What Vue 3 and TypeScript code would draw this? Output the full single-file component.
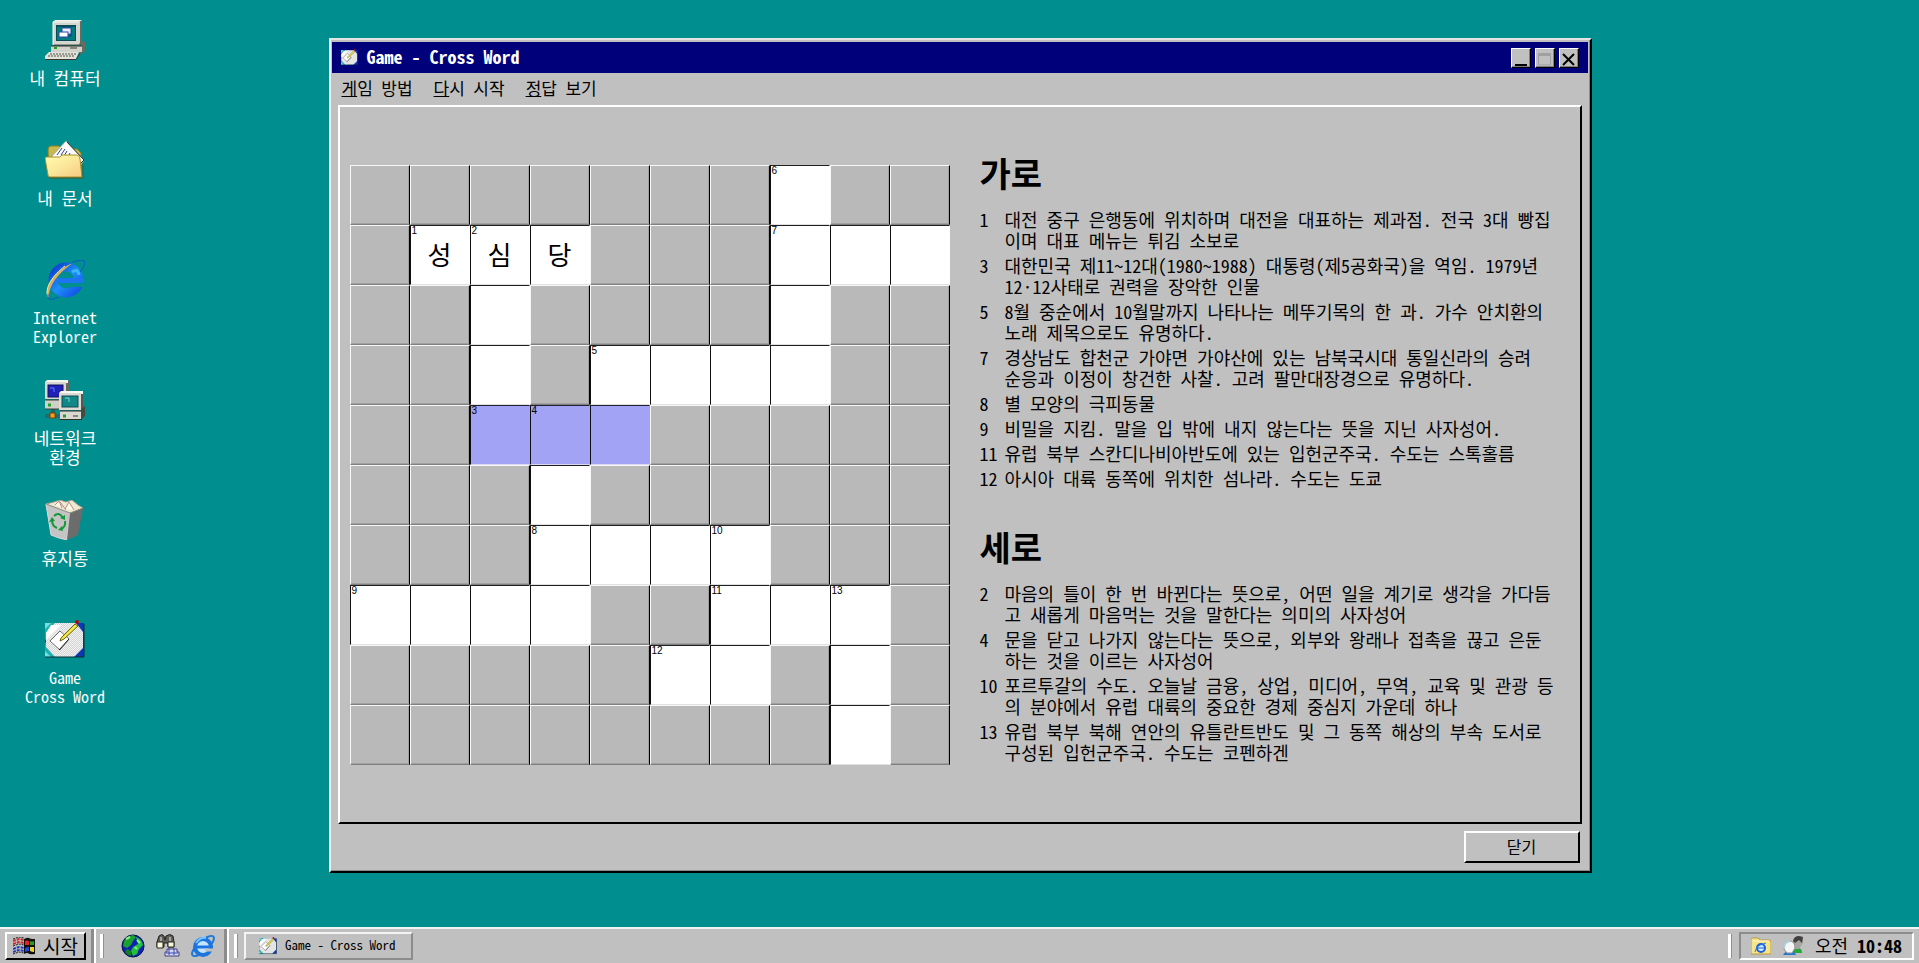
<script setup lang="ts">
import { ref, computed } from 'vue'

interface Shortcut {
  icon: string
  label: string
  korean?: boolean
}

interface Clue {
  no: number
  text: string
}

const shortcuts: Shortcut[] = [
  { icon: 'computer', label: '내 컴퓨터', korean: true },
  { icon: 'documents', label: '내 문서', korean: true },
  { icon: 'explorer', label: 'Internet\nExplorer' },
  { icon: 'network', label: '네트워크\n환경', korean: true },
  { icon: 'trash', label: '휴지통', korean: true },
  { icon: 'crossword', label: 'Game\nCross Word' },
]

const menus = [
  { key: '게', rest: '임 방법' },
  { key: '다', rest: '시 시작' },
  { key: '정', rest: '답 보기' },
]

const across: Clue[] = [
  { no: 1, text: '대전 중구 은행동에 위치하며 대전을 대표하는 제과점. 전국 3대 빵집이며 대표 메뉴는 튀김 소보로' },
  { no: 3, text: '대한민국 제11~12대(1980~1988) 대통령(제5공화국)을 역임. 1979년 12·12사태로 권력을 장악한 인물' },
  { no: 5, text: '8월 중순에서 10월말까지 나타나는 메뚜기목의 한 과. 가수 안치환의 노래 제목으로도 유명하다.' },
  { no: 7, text: '경상남도 합천군 가야면 가야산에 있는 남북국시대 통일신라의 승려 순응과 이정이 창건한 사찰. 고려 팔만대장경으로 유명하다.' },
  { no: 8, text: '별 모양의 극피동물' },
  { no: 9, text: '비밀을 지킴. 말을 입 밖에 내지 않는다는 뜻을 지닌 사자성어.' },
  { no: 11, text: '유럽 북부 스칸디나비아반도에 있는 입헌군주국. 수도는 스톡홀름' },
  { no: 12, text: '아시아 대륙 동쪽에 위치한 섬나라. 수도는 도쿄' },
]

const down: Clue[] = [
  { no: 2, text: '마음의 틀이 한 번 바뀐다는 뜻으로, 어떤 일을 계기로 생각을 가다듬고 새롭게 마음먹는 것을 말한다는 의미의 사자성어' },
  { no: 4, text: '문을 닫고 나가지 않는다는 뜻으로, 외부와 왕래나 접촉을 끊고 은둔하는 것을 이르는 사자성어' },
  { no: 10, text: '포르투갈의 수도. 오늘날 금융, 상업, 미디어, 무역, 교육 및 관광 등의 분야에서 유럽 대륙의 중요한 경제 중심지 가운데 하나' },
  { no: 13, text: '유럽 북부 북해 연안의 유틀란트반도 및 그 동쪽 해상의 부속 도서로 구성된 입헌군주국. 수도는 코펜하겐' },
]

const groups = [
  { title: '가로', clues: across },
  { title: '세로', clues: down },
]

// '#' is an open square, '*' an open square of the selected word
const layout = [
  '.......#..',
  '.###...###',
  '..#....#..',
  '..#.####..',
  '..***.....',
  '...#......',
  '...####...',
  '####..###.',
  '.....##.#.',
  '........#.',
]

const numbers: Record<string, number> = {
  '0-7': 6, '1-1': 1, '1-2': 2, '1-7': 7, '3-4': 5, '4-2': 3, '4-3': 4,
  '6-3': 8, '6-6': 10, '7-0': 9, '7-6': 11, '7-8': 13, '8-5': 12,
}

const answers = ref<Record<string, string>>({ '1-1': '성', '1-2': '심', '1-3': '당' })

const cells = computed(() =>
  layout.flatMap((row, r) =>
    [...row].map((mark, c) => {
      const id = `${r}-${c}`
      return { id, open: mark !== '.', selected: mark === '*', no: numbers[id], label: `${r + 1}행 ${c + 1}열` }
    }),
  ),
)
</script>

<template>
  <div class="screen">
    <svg class="defs" aria-hidden="true">
      <defs>
        <linearGradient id="g-ie" x1="0" y1="0" x2="1" y2="1">
          <stop offset="0" stop-color="#0a3fd0" />
          <stop offset="0.5" stop-color="#1e90f8" />
          <stop offset="1" stop-color="#1450e8" />
        </linearGradient>
        <linearGradient id="g-folder" x1="0" y1="0" x2="1" y2="1">
          <stop offset="0" stop-color="#fffcb0" />
          <stop offset="0.5" stop-color="#fbe79a" />
          <stop offset="1" stop-color="#f8c880" />
        </linearGradient>
        <pattern id="p-dots" width="2" height="2" patternUnits="userSpaceOnUse">
          <rect width="2" height="2" fill="#f2f2f2" />
          <rect width="1" height="1" fill="#d4d4d4" />
          <rect x="1" y="1" width="1" height="1" fill="#d4d4d4" />
        </pattern>

        <symbol id="computer" viewBox="0 0 40 40">
          <path d="M33 1l4-1v23l-3 2z" fill="#6a6a60" />
          <path d="M8 2l2-2h27l-3 2z" fill="#f4f4ee" />
          <rect x="8" y="1" width="27" height="24" rx="1" fill="#d6d6d0" />
          <path d="M8 25V2h26" fill="none" stroke="#f8f8f4" />
          <path d="M9 25h26v-2" fill="none" stroke="#585850" />
          <rect x="11" y="5" width="20" height="16" fill="#084c58" />
          <rect x="12" y="7" width="18" height="13" fill="#007c80" />
          <path d="M17 8h9v8h-3" fill="none" stroke="#003c70" stroke-width="1" />
          <rect x="17" y="8" width="9" height="6" fill="#e8f0ff" stroke="#3048a0" />
          <rect x="14" y="12" width="9" height="5" fill="#fff" stroke="#3048a0" />
          <path d="M36 22l4-1v10l-5 4z" fill="#6a6a60" />
          <path d="M6 26h31v6H6z" fill="#d2d2ca" />
          <path d="M6 26h31" stroke="#282820" />
          <path d="M9 28h3" stroke="#20a020" stroke-width="2" />
          <path d="M25 28h7" stroke="#383830" />
          <path d="M4 32h30l-3 7H0v-3z" fill="#e2e2da" />
          <path d="M0 39.5h31l4-6" fill="none" stroke="#383830" />
          <path d="M5 34h26M3 36h26" stroke="#50504a" stroke-width="1" stroke-dasharray="2 1" />
        </symbol>

        <symbol id="documents" viewBox="0 0 40 40">
          <path d="M3 10q0-4 3-4h8l3 3h15l4 4v24H4z" fill="#c8b850" stroke="#8c8020" />
          <path d="M7 16L21 1l18 19-4 6-28-8z" fill="#fbfbfb" stroke="#a8a8a8" />
          <path d="M22 2l17 18-3 3" fill="none" stroke="#303030" />
          <path d="M12 15l5-7M16 15l4-6M19 16l3-5M23 17l2-4" stroke="#304080" stroke-width="1" />
          <path d="M0 18q0-1 2-1h13l2-2h15q3 1 3 4l2 18H5q-2 0-2-2z" fill="url(#g-folder)" stroke="#a89030" />
          <path d="M4 38h34V24" fill="none" stroke="#5c5820" />
        </symbol>

        <symbol id="explorer" viewBox="0 0 40 40">
          <circle cx="21" cy="20" r="13" fill="none" stroke="url(#g-ie)" stroke-width="9" />
          <rect x="11" y="18" width="28" height="5" fill="#1c74f0" />
          <path d="M25 23h15v4h-15z" fill="#008e8e" />
          <path d="M27 12q6-4 7 3" fill="none" stroke="#38b8f8" stroke-width="3" />
          <path d="M4 38C-3 30 9 10 28 3C12 14 3 27 4 38z" fill="#d8b060" />
          <path d="M3 37C-1 28 8 15 20 6" fill="none" stroke="#f8e8a0" />
          <path d="M26 3q14-6 14 0-1 5-5 9M3 34q-2 9 11 3" fill="none" stroke="#0b57c8" stroke-width="1" />
        </symbol>

        <symbol id="explorer-small" viewBox="0 0 24 24">
          <ellipse cx="12" cy="12" rx="14" ry="5" transform="rotate(-42 12 12)" fill="none" stroke="#1e78d8" stroke-width="2" />
          <circle cx="12" cy="13" r="8" fill="#c4e4ff" stroke="#1c74dc" stroke-width="4" />
          <path d="M6 13h16" stroke="#1c74dc" stroke-width="3" />
          <path d="M14 16h9" stroke="#c0c0c0" stroke-width="3" />
          <path d="M5 9q4-6 10-5" fill="none" stroke="#74c4ff" stroke-width="2" />
        </symbol>

        <symbol id="network" viewBox="0 0 40 40">
          <path d="M20 2l4-1v26l-3 1z" fill="#686860" />
          <path d="M0 2l2-2h21v3H0z" fill="#f4f4f0" />
          <rect x="0" y="2" width="21" height="17" fill="#d8d8d0" />
          <rect x="3" y="5" width="15" height="12" fill="#2020b8" stroke="#101060" />
          <path d="M5 8h4v4" fill="none" stroke="#6080ff" />
          <path d="M0 20h20v9H0z" fill="#d0d0c8" />
          <path d="M0 20h20M0 29h14" stroke="#404038" />
          <path d="M3 25h3" stroke="#20a030" stroke-width="3" />
          <path d="M7 29v6M9 29v6" stroke="#404040" />
          <path d="M0 35h16M0 37h16" stroke="#484848" />
          <rect x="5" y="33" width="5" height="5" fill="#f0a020" stroke="#804000" />
          <path d="M36 12l2-1v17l-3 2z" fill="#585850" />
          <path d="M14 13l2-2h22v3z" fill="#f8f8f4" />
          <rect x="14" y="13" width="22" height="17" fill="#dcdcd4" />
          <rect x="17" y="16" width="16" height="11" fill="#108888" stroke="#104850" />
          <path d="M20 18h4v4" fill="none" stroke="#80d8d0" />
          <path d="M36 29l4-3v10l-4 4z" fill="#484840" />
          <path d="M15 31h21v8H15z" fill="#d8d8d0" />
          <path d="M15 31h21M15 39.500h22" stroke="#303028" />
          <path d="M18 36h3" stroke="#20a030" stroke-width="3" />
          <path d="M28 36h5" stroke="#303030" />
        </symbol>

        <symbol id="trash" viewBox="0 0 40 40">
          <path d="M1 4l8-2 6-2 6 2 6-2 6 5 5 3-12 7L2 10z" fill="#f0e8d0" stroke="#a09888" />
          <path d="M10 5l4-4 3 7M20 9l4-7 5 8M15 2l6 8" fill="#fff8e8" stroke="#b09088" />
          <path d="M1 4l9 3 15 6-3 27-8-2-8-3z" fill="#c4c4c4" stroke="#d8d8d8" />
          <path d="M25 13L38 8 33 35l-11 5z" fill="#6c6c6c" />
          <path d="M1 4l24 9 13-5" fill="none" stroke="#8c8c80" />
          <path d="M9 16q5-5 9 2M20 21q1 6-4 8M12 28q-5-2-5-8" fill="none" stroke="#149838" stroke-width="2" />
          <path d="M15 18l5 2 0-5zM18 31l-5-1 4-4zM4 22l3-5 3 4z" fill="#149838" />
        </symbol>

        <symbol id="crossword" viewBox="0 0 40 40">
          <rect x="0" y="3" width="39" height="34" fill="#1038b0" />
          <path d="M0 3h20L0 20zM0 22l16 15H0z" fill="#20b0b0" />
          <path d="M0 3h6L0 9zM0 31l6 6H0z" fill="#78e0d8" />
          <path d="M10 3h21l7 9v16l-9 9H10L1 27V13z" fill="url(#p-dots)" />
          <path d="M6 5h10L1 20v-7z" fill="#fff" />
          <path d="M0 37h39V4" fill="none" stroke="#083038" />
          <path d="M5 21l10-10 9 8-9 11z" fill="#fff" stroke="#707070" />
          <path d="M14 30l10-11" stroke="#202020" />
          <path d="M16 18L30 4l3 2-14 13-4 2z" fill="#f0e840" stroke="#706018" />
          <circle cx="32" cy="2" r="2" fill="#b00808" />
        </symbol>

        <symbol id="windows" viewBox="0 0 22 18">
          <path d="M11 2q4-2 5-1t6 1v15q-6 1-7-1-3 0-4 1z" fill="#101010" />
          <path d="M12 4q2-1 4 0v4h-4z" fill="#e82020" />
          <path d="M17 4q2 1 4 0v4h-4z" fill="#20a030" />
          <path d="M12 11q2-1 4-1v4q-2 0-4 1z" fill="#2048e0" />
          <path d="M17 10h4v5q-2 0-4-1z" fill="#f0d820" />
          <path d="M0 4l6-2 5 1M0 7l6-2 5 1" fill="none" stroke="#d02828" stroke-width="2" stroke-dasharray="3 1" />
          <path d="M0 12l6-2 5 1M0 15l6-2 5 1" fill="none" stroke="#2838b8" stroke-width="2" stroke-dasharray="3 1" />
          <path d="M0 2l6-2 5 1M0 9l6-2 5 1M0 17l6-2 5 1" fill="none" stroke="#202020" stroke-dasharray="2 1" />
        </symbol>

        <symbol id="globe" viewBox="0 0 24 24">
          <circle cx="12" cy="12" r="11" fill="#1020b0" stroke="#001048" />
          <path d="M3 7q3-5 9-6l3 2-3 4-2 4-4 3-4-2z" fill="#18a030" />
          <path d="M15 3q6 2 7 8l-4 4-2 5-4 2-2-5 2-4 5-3z" fill="#20c040" />
          <path d="M6 15l4 2v5q-4-1-6-4z" fill="#10801c" />
          <path d="M5 5l4-2M16 6l3 3M14 13l2 2" stroke="#90f080" stroke-width="2" />
        </symbol>

        <symbol id="search" viewBox="0 0 24 24">
          <path d="M1 8l2-6q3-3 5 0l1 4 1-4q4-3 7 0l1 6v5h-6V9H8v4H1z" fill="#606058" stroke="#202020" />
          <path d="M1 8h6v6H1zM12 8h6v5h-6z" fill="#f8f8dc" stroke="#282820" />
          <path d="M5 3v4M14 3v4" stroke="#e8e8e8" />
          <path d="M11 15h10v3h2v4H9v-4h2z" fill="#d8d8f0" stroke="#404080" />
          <path d="M13 14v7M18 14v7M10 19h12" stroke="#3848b8" />
        </symbol>

        <symbol id="tray-folder" viewBox="0 0 20 18">
          <path d="M0 2q0-1 2-1h5l2 2h9q2 0 2 2v12H0z" fill="#f8e488" stroke="#b89c40" />
          <path d="M2 4h16" stroke="#fff8c8" />
          <circle cx="10" cy="11" r="4" fill="#d4ecff" stroke="#1c60d8" stroke-width="2" />
          <path d="M7 11h7" stroke="#1c60d8" />
          <path d="M4 15q1-7 11-9" fill="none" stroke="#2c80e8" />
        </symbol>

        <symbol id="people" viewBox="0 0 20 20">
          <path d="M9 17q2-5 6-5t4 5z" fill="#28a838" />
          <path d="M10 6l2-4q4-3 8-1v6l-4 6h-5z" fill="#a8a4a0" />
          <path d="M10 5q1-5 6-5l4 1-1 6-3-3-4 3z" fill="#404040" />
          <path d="M0 19q2-4 7-4t6 4z" fill="#2878d0" />
          <path d="M1 13Q0 6 6 5q6 0 6 7l-3 5H4z" fill="#f6f6f6" stroke="#909090" />
          <path d="M1 12q0-6 6-7" fill="none" stroke="#a8d0e0" stroke-width="2" />
        </symbol>
      </defs>
    </svg>

    <main class="desktop">
      <nav class="shortcuts" aria-label="바탕 화면">
        <a v-for="item in shortcuts" :key="item.icon" href="#" class="shortcut">
          <svg class="shortcut-icon" aria-hidden="true"><use :href="`#${item.icon}`" /></svg>
          <span class="shortcut-label" :class="{ korean: item.korean }">{{ item.label }}</span>
        </a>
      </nav>

      <section class="window" aria-label="Game - Cross Word">
        <header class="titlebar">
          <svg class="title-icon" aria-hidden="true"><use href="#crossword" /></svg>
          <h1 class="title">Game - Cross Word</h1>
          <div class="controls">
            <button type="button" class="control" aria-label="최소화">
              <svg viewBox="0 0 16 16" aria-hidden="true"><path d="M3 14h12v2H3z" fill="#000" /></svg>
            </button>
            <button type="button" class="control" aria-label="최대화" disabled>
              <svg viewBox="0 0 16 16" aria-hidden="true">
                <path d="M2.500 4v11h12V4z" fill="none" stroke="#a0a0a0" />
                <path d="M2 3h13v3H2z" fill="#a0a0a0" />
              </svg>
            </button>
            <button type="button" class="control" aria-label="창 닫기">
              <svg viewBox="0 0 16 16" aria-hidden="true"><path d="M3 4l11 11M14 4L3 15" stroke="#000" stroke-width="2" /></svg>
            </button>
          </div>
        </header>

        <nav class="menubar" aria-label="메뉴">
          <button v-for="menu in menus" :key="menu.key" type="button" class="menu"><u>{{ menu.key }}</u>{{ menu.rest }}</button>
        </nav>

        <div class="panel">
          <div class="board">
            <template v-for="cell in cells" :key="cell.id">
              <label v-if="cell.open" class="cell open" :class="{ selected: cell.selected }">
                <span v-if="cell.no" class="number">{{ cell.no }}</span>
                <input v-model="answers[cell.id]" class="letter" type="text" maxlength="1" :aria-label="cell.label" />
              </label>
              <div v-else class="cell"></div>
            </template>
          </div>

          <div class="clues">
            <section v-for="group in groups" :key="group.title" class="group">
              <h2 class="heading">{{ group.title }}</h2>
              <ul class="list">
                <li v-for="clue in group.clues" :key="clue.no" class="clue">
                  <span class="clue-no">{{ clue.no }}</span>
                  <span>{{ clue.text }}</span>
                </li>
              </ul>
            </section>
          </div>
        </div>

        <footer class="footer">
          <button type="button" class="close">닫기</button>
        </footer>
      </section>
    </main>

    <footer class="taskbar">
      <div class="start-area">
        <button type="button" class="start">
          <svg class="flag" aria-hidden="true"><use href="#windows" /></svg>
          <span>시작</span>
        </button>
      </div>
      <div class="quick">
        <span class="grip"></span>
        <button type="button" class="quick-button" aria-label="글로브"><svg aria-hidden="true"><use href="#globe" /></svg></button>
        <button type="button" class="quick-button" aria-label="검색"><svg aria-hidden="true"><use href="#search" /></svg></button>
        <button type="button" class="quick-button" aria-label="Internet Explorer"><svg aria-hidden="true"><use href="#explorer-small" /></svg></button>
      </div>
      <div class="tasks">
        <span class="grip"></span>
        <button type="button" class="task">
          <svg class="task-icon" aria-hidden="true"><use href="#crossword" /></svg>
          <span>Game - Cross Word</span>
        </button>
      </div>
      <span class="grip tray-grip"></span>
      <div class="tray">
        <svg class="tray-icon" aria-hidden="true"><use href="#tray-folder" /></svg>
        <svg class="tray-icon" aria-hidden="true"><use href="#people" /></svg>
        <time class="clock">오전 <b>10:48</b></time>
      </div>
    </footer>
  </div>
</template>

<style>
body {
  background: #008e8e;
}
</style>

<style scoped>
.screen,
.screen button,
.screen input {
  font-family: "Noto Sans Mono CJK KR", "Liberation Mono", "Noto Sans CJK KR", monospace;
}

.screen {
  display: flex;
  flex-direction: column;
  min-height: 100vh;
  background: #008e8e;
  color: #000;
}

.defs {
  position: absolute;
  width: 0;
  height: 0;
}

button {
  margin: 0;
  padding: 0;
  color: inherit;
}

.desktop {
  flex: 1;
  display: grid;
  grid-template-columns: 130px minmax(0, 1fr) 129px;
  align-items: start;
}

.shortcuts {
  display: flex;
  flex-direction: column;
  padding-top: 20px;
}

.shortcut {
  display: flex;
  flex-direction: column;
  align-items: center;
  gap: 8px;
  height: 120px;
  color: #fff;
  text-decoration: none;
}

.shortcut-icon {
  width: 40px;
  height: 40px;
}

.shortcut-label {
  font-size: 16px;
  line-height: 19px;
  text-align: center;
  white-space: pre-line;
}

.shortcut-label.korean {
  font-size: 17px;
}

.window {
  justify-self: center;
  box-sizing: border-box;
  width: 100%;
  max-width: 1263px;
  margin-top: 38px;
  border: 2px solid;
  border-color: #e4e4e4 #000 #000 #f4f4f4;
  box-shadow: inset -1px -1px #8c8c8c;
  background: #c0c0c0;
}

.titlebar {
  display: flex;
  align-items: center;
  gap: 9px;
  margin: 2px 2px 0 1px;
  padding: 0 9px;
  height: 31px;
  background: #00007b;
  color: #fff;
}

.title-icon {
  width: 17px;
  height: 17px;
}

.title {
  flex: 1;
  margin: 0;
  padding-bottom: 4px;
  font-size: 18px;
  line-height: 20px;
  font-weight: 700;
}

.controls {
  display: flex;
  gap: 4px;
}

.control {
  box-sizing: border-box;
  width: 20px;
  height: 20px;
  border: 1px solid;
  border-color: #fff #000 #000 #fff;
  background: #c0c0c0;
  box-shadow: inset -1px -1px #808080;
}

.control svg {
  display: block;
  width: 16px;
  height: 16px;
}

.menubar {
  display: flex;
  gap: 21px;
  padding: 5px 11px 7px;
}

.menu {
  border: 0;
  background: none;
  font-size: 17px;
  line-height: 20px;
}

.panel {
  display: grid;
  grid-template-columns: 600px minmax(0, 1fr);
  align-items: center;
  gap: 30px;
  min-height: 715px;
  margin: 0 8px 0 7px;
  padding: 0 24px 0 10px;
  border: 2px solid;
  border-color: #fff #000 #000 #fff;
}

.board {
  display: grid;
  grid-template-columns: repeat(10, 1fr);
}

.cell {
  position: relative;
  box-sizing: border-box;
  height: 60px;
  border: 1px solid;
  border-color: #f8f8f8 #000 #808080 #f8f8f8;
  box-shadow: inset -1px -1px #a0a0a0;
  background: #b9b9b9;
}

.cell.open {
  border-color: #202020 #fff #e0e0e0 #101010;
  box-shadow: none;
  background: #fff;
}

.cell.selected {
  border-color: #202030 #a3a3f5 #d8d8f0 #101010;
  background: #a3a3f5;
}

.number {
  position: absolute;
  top: 0;
  left: 1px;
  font-family: "Liberation Sans", sans-serif;
  font-size: 10px;
  line-height: 10px;
}

.letter {
  display: block;
  box-sizing: border-box;
  width: 100%;
  height: 100%;
  padding: 0 0 2px;
  border: 0;
  background: transparent;
  text-align: center;
  font-size: 26px;
}

.clues {
  display: flex;
  flex-direction: column;
  gap: 35px;
  padding-bottom: 9px;
}

.group {
  display: flex;
  flex-direction: column;
  gap: 17px;
}

.heading {
  margin: 0;
  font-size: 34px;
  line-height: 38px;
  font-weight: 700;
}

.list {
  margin: 0;
  padding: 0;
  list-style: none;
}

.clue {
  display: grid;
  grid-template-columns: 25px minmax(0, 1fr);
  margin-bottom: 4px;
  font-size: 18px;
  line-height: 21px;
}

.footer {
  display: flex;
  justify-content: flex-end;
  padding: 7px 10px 8px;
}

.close {
  box-sizing: border-box;
  width: 116px;
  height: 32px;
  padding-bottom: 2px;
  border: 2px solid;
  border-color: #fff #000 #000 #fff;
  background: #c0c0c0;
  font-size: 16px;
}

.taskbar {
  display: flex;
  align-items: center;
  box-sizing: border-box;
  height: 36px;
  padding: 0 5px;
  border-top: 2px solid #f4f4f4;
  background: #c0c0c0;
}

.start-area,
.quick {
  display: flex;
  align-items: center;
  box-sizing: border-box;
  height: 34px;
  border-right: 3px solid #8c8c8c;
  box-shadow: 2px 0 #fff;
}

.start-area {
  padding-right: 5px;
}

.start {
  display: flex;
  align-items: center;
  gap: 8px;
  box-sizing: border-box;
  height: 28px;
  padding: 0 6px;
  border: 2px solid;
  border-color: #fff #000 #000 #fff;
  background: #c0c0c0;
  font-size: 19px;
  line-height: 22px;
}

.flag {
  width: 22px;
  height: 18px;
}

.grip {
  box-sizing: border-box;
  width: 4px;
  height: 24px;
  border-left: 3px solid #fff;
  border-right: 1px solid #909090;
}

.quick {
  gap: 11px;
  padding: 0 9px 0 6px;
}

.quick .grip {
  margin-right: 6px;
}

.quick-button {
  width: 24px;
  height: 24px;
  border: 0;
  background: none;
}

.quick-button svg {
  display: block;
  width: 24px;
  height: 24px;
}

.tasks {
  flex: 1;
  display: flex;
  align-items: center;
  gap: 6px;
  padding-left: 7px;
}

.task {
  display: flex;
  align-items: center;
  gap: 8px;
  box-sizing: border-box;
  width: 169px;
  height: 28px;
  padding: 0 13px;
  border: 2px solid;
  border-color: #f4f4f4 #8c8c8c #8c8c8c #f4f4f4;
  background: #c0c0c0;
  font-size: 13px;
  line-height: 18px;
  white-space: nowrap;
}

.task span {
  padding-bottom: 2px;
}

.task-icon {
  width: 18px;
  height: 18px;
}

.tray-grip {
  margin-right: 7px;
}

.tray {
  display: flex;
  align-items: center;
  gap: 12px;
  box-sizing: border-box;
  height: 28px;
  padding: 0 10px;
  border: 2px solid;
  border-color: #8c8c8c #fff #fff #8c8c8c;
}

.tray-icon {
  width: 20px;
  height: 20px;
}

.clock {
  padding-bottom: 2px;
  font-size: 18px;
  line-height: 22px;
  white-space: nowrap;
}
</style>
